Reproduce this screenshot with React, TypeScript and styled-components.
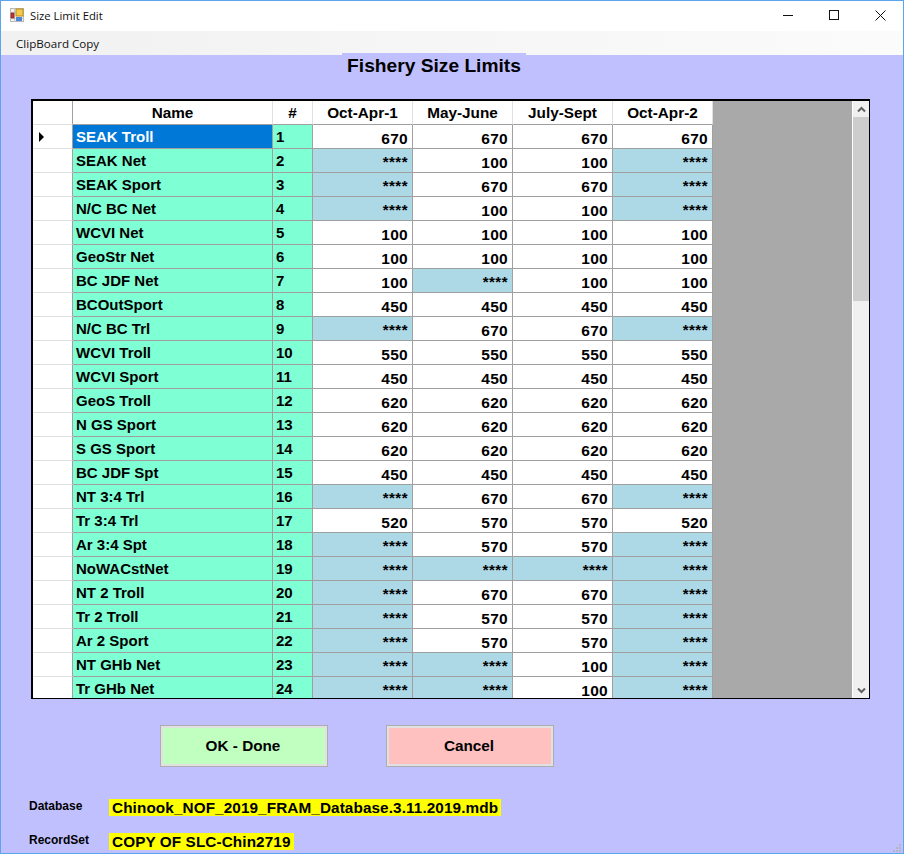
import React from "react";
import styled, { createGlobalStyle } from "styled-components";

const Global = createGlobalStyle`
  html, body { margin: 0; padding: 0; background: #c0c0ff; }
  * { box-sizing: border-box; }
`;

const Win = styled.div`
  position: relative; width: 904px; height: 854px; display: flex; flex-direction: column;
  background: #c0c0ff; border: 1px solid #5aa5ee;
  font-family: "Liberation Sans", Arial, sans-serif; color: #000; overflow: hidden;
`;
const TitleBar = styled.div`
  height: 30px; flex: none; background: #fff; display: flex; align-items: center; padding: 0 0 2px 9px;
`;
const TitleText = styled.span`
  font: 11.3px "Open Sans", "Noto Sans", sans-serif; margin-left: 6px; color: #111;
`;
const Controls = styled.div`margin-left: auto; display: flex;`;
const Ctl = styled.div`width: 46px; height: 28px; display: flex; align-items: center; justify-content: center;`;
const MenuBar = styled.div`
  height: 24px; flex: none; background: linear-gradient(90deg, #f1f1f1, #fbfbfb); display: flex; align-items: center; padding-left: 15px;
  font: 11.6px "Open Sans", "Noto Sans", sans-serif; color: #111;
`;
const Heading = styled.div`
  align-self: flex-start; margin: -2px 0 0 341px; width: 184px; height: 46px; padding-top: 2px; flex: none; text-align: center;
  font-size: 19.2px; font-weight: 700; line-height: 22px; white-space: nowrap; background: #c0c0ff;
`;
const Main = styled.div`
  width: 839px; height: 600px; margin-left: 30px; flex: none; border: 2px solid #000; border-right-width: 1px; border-bottom-width: 1px; display: flex; background: #a9a9a9;
`;
const Table = styled.div`
  width: 680px; flex: none; display: grid; grid-template-columns: 40px 200px 40px repeat(4, 100px); grid-auto-rows: 24px; align-content: start; overflow: hidden; height: 597px;
`;
const Cell = styled.div<{ $bg?: string; $align?: string; $head?: boolean; $color?: string }>`
  background: ${(p) => p.$bg || "#fff"}; color: ${(p) => p.$color || "#000"};
  border-right: 1px solid ${(p) => (p.$head ? "#e0e0e0" : "#a0a0a0")};
  border-bottom: 1px solid #a0a0a0;
  font-size: 15px; font-weight: 700; line-height: 24px; white-space: nowrap;
  text-align: ${(p) => p.$align || "left"}; padding: 0 3px; overflow: hidden;
`;
const HeadCell = styled(Cell)`font-size: 15.3px; line-height: 23px;`;
const RowHead = styled.div`
  background: #fff; border-right: 1px solid #a0a0a0; border-bottom: 1px solid #e0e0e0; display: flex; align-items: center; padding-left: 6px;
`;
const NumCell = styled(Cell)`padding: 5px 4px 0 0; line-height: 18px; font-size: 15.5px; letter-spacing: 0.3px;`;
const StarCell = styled(Cell)`padding: 0 4px 0 0; line-height: 25px; letter-spacing: 0.5px;`;
const Scroll = styled.div`
  width: 17px; margin-left: auto; flex: none; background: #f0f0f0; display: flex; flex-direction: column; border-left: 1px solid #fff; height: 597px;
`;
const ScrollBtn = styled.div`height: 16px; flex: none; display: flex; align-items: center; justify-content: center;`;
const Thumb = styled.div`height: 184px; flex: none; background: #cdcdcd;`;
const Spacer = styled.div`flex: 1;`;
const Buttons = styled.div`display: flex; margin: 26px 0 0 159px; gap: 58px; flex: none;`;
const Btn = styled.div<{ $bg: string }>`
  width: 168px; height: 42px; padding-right: 2px; background: ${(p) => p.$bg}; border: 1px solid #adadad; box-shadow: inset 0 0 0 2px #e1e1e1;
  display: flex; align-items: center; justify-content: center; font-size: 15.3px; font-weight: 700;
`;
const Info = styled.div`display: grid; grid-template-columns: 80px auto; justify-content: start; margin: 30px 0 0 28px; row-gap: 15px; flex: none;`;
const InfoLabel = styled.div`font-size: 12px; font-weight: 700; line-height: 13px; padding-top: 3px; height: 17px;`;
const InfoValue = styled.div`
  background: #ff0; font-size: 15.3px; letter-spacing: 0.1px; font-weight: 700; height: 17px; line-height: 18px; margin-top: 2px; padding: 0 3px; justify-self: start;
`;
const Grip = styled.svg`position: absolute; right: 2px; bottom: 1px;`;

const S = "****";
type Row = [string, string, string, string, string];
const rows: Row[] = [
  ["SEAK Troll", "670", "670", "670", "670"],
  ["SEAK Net", S, "100", "100", S],
  ["SEAK Sport", S, "670", "670", S],
  ["N/C BC Net", S, "100", "100", S],
  ["WCVI Net", "100", "100", "100", "100"],
  ["GeoStr Net", "100", "100", "100", "100"],
  ["BC JDF Net", "100", S, "100", "100"],
  ["BCOutSport", "450", "450", "450", "450"],
  ["N/C BC Trl", S, "670", "670", S],
  ["WCVI Troll", "550", "550", "550", "550"],
  ["WCVI Sport", "450", "450", "450", "450"],
  ["GeoS Troll", "620", "620", "620", "620"],
  ["N GS Sport", "620", "620", "620", "620"],
  ["S GS Sport", "620", "620", "620", "620"],
  ["BC JDF Spt", "450", "450", "450", "450"],
  ["NT 3:4 Trl", S, "670", "670", S],
  ["Tr 3:4 Trl", "520", "570", "570", "520"],
  ["Ar 3:4 Spt", S, "570", "570", S],
  ["NoWACstNet", S, S, S, S],
  ["NT 2 Troll", S, "670", "670", S],
  ["Tr 2 Troll", S, "570", "570", S],
  ["Ar 2 Sport", S, "570", "570", S],
  ["NT GHb Net", S, S, "100", S],
  ["Tr GHb Net", S, S, "100", S],
];
const heads = ["Oct-Apr-1", "May-June", "July-Sept", "Oct-Apr-2"];

export default function App() {
  return (
    <Win>
      <Global />
      <TitleBar>
        <svg width="14" height="14" viewBox="0 0 14 14">
          <rect x="0.5" y="0.5" width="13" height="13" fill="#f2f2f2" stroke="#b8b8b8" />
          <path d="M0 4.5H6M0 10.5H14M4.5 0V14" stroke="#c8c8c8" />
          <rect x="1" y="5" width="3" height="5" fill="#c8322a" stroke="#7a1d18" strokeWidth="0.6" />
          <rect x="6" y="1" width="7" height="7" fill="#f7c948" stroke="#b98d1e" />
          <rect x="6" y="9" width="6" height="4" fill="#4f86d8" />
        </svg>
        <TitleText>Size Limit Edit</TitleText>
        <Controls>
          <Ctl>
            <svg width="10" height="10" viewBox="0 0 10 10"><path d="M0 5.5H10" stroke="#111" /></svg>
          </Ctl>
          <Ctl>
            <svg width="10" height="10" viewBox="0 0 10 10"><rect x="0.5" y="0.5" width="9" height="9" fill="none" stroke="#111" /></svg>
          </Ctl>
          <Ctl>
            <svg width="11" height="11" viewBox="0 0 11 11"><path d="M0.5 0.5L10.5 10.5M10.5 0.5L0.5 10.5" stroke="#111" /></svg>
          </Ctl>
        </Controls>
      </TitleBar>
      <MenuBar>ClipBoard Copy</MenuBar>
      <Heading>Fishery Size Limits</Heading>
      <Main>
        <Table>
          <RowHead />
          <HeadCell $head $align="center">Name</HeadCell>
          <HeadCell $head $align="center">#</HeadCell>
          {heads.map((h) => (
            <HeadCell key={h} $head $align="center">{h}</HeadCell>
          ))}
          {rows.map((r, i) => (
            <React.Fragment key={r[0]}>
              <RowHead>
                {i === 0 && (
                  <svg width="6" height="10" viewBox="0 0 6 10"><path d="M0 0L5 5L0 10Z" fill="#000" /></svg>
                )}
              </RowHead>
              <Cell $bg={i === 0 ? "#0078d7" : "#7fffd4"} $color={i === 0 ? "#fff" : "#000"}>{r[0]}</Cell>
              <Cell $bg="#7fffd4">{i + 1}</Cell>
              {r.slice(1).map((v, j) =>
                v === S ? (
                  <StarCell key={j} $bg="#add8e6" $align="right">{v}</StarCell>
                ) : (
                  <NumCell key={j} $align="right">{v}</NumCell>
                )
              )}
            </React.Fragment>
          ))}
        </Table>
        <Scroll>
          <ScrollBtn>
            <svg width="9" height="7" viewBox="0 0 9 7"><path d="M1 5.5L4.5 2L8 5.5" fill="none" stroke="#606060" strokeWidth="2" /></svg>
          </ScrollBtn>
          <Thumb />
          <Spacer />
          <ScrollBtn>
            <svg width="9" height="7" viewBox="0 0 9 7"><path d="M1 1.5L4.5 5L8 1.5" fill="none" stroke="#606060" strokeWidth="2" /></svg>
          </ScrollBtn>
        </Scroll>
      </Main>
      <Buttons>
        <Btn $bg="#c0ffc0">OK - Done</Btn>
        <Btn $bg="#ffc0c0">Cancel</Btn>
      </Buttons>
      <Info>
        <InfoLabel>Database</InfoLabel>
        <InfoValue>Chinook_NOF_2019_FRAM_Database.3.11.2019.mdb</InfoValue>
        <InfoLabel>RecordSet</InfoLabel>
        <InfoValue>COPY OF SLC-Chin2719</InfoValue>
      </Info>
      <Grip width="8" height="8" viewBox="0 0 8 8" fill="#b4b4c4">
        <rect x="6" y="0" width="2" height="2" />
        <rect x="3" y="3" width="2" height="2" />
        <rect x="6" y="3" width="2" height="2" />
        <rect x="0" y="6" width="2" height="2" />
        <rect x="3" y="6" width="2" height="2" />
        <rect x="6" y="6" width="2" height="2" />
      </Grip>
    </Win>
  );
}
